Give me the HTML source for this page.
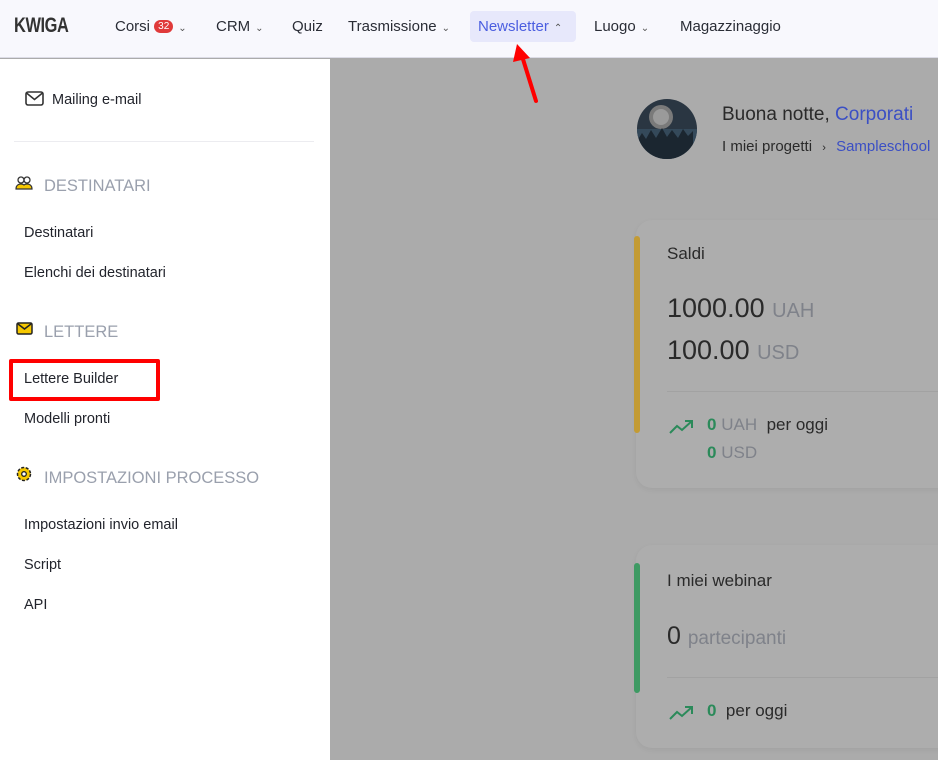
<!DOCTYPE html>
<html><head><meta charset="utf-8"><style>
*{margin:0;padding:0;box-sizing:border-box}
body{width:938px;height:760px;overflow:hidden;position:relative;background:#ababab;font-family:"Liberation Sans",sans-serif;color:#222}
.a{position:absolute;white-space:nowrap}
.hdr{position:absolute;left:0;top:0;width:938px;height:58px;background:#f8f8fd;border-bottom:1px solid #dcdce6}
.nav{font-size:15px;color:#2a2d36;top:18px}
.chev{font-size:10px;color:#555;margin-left:5px}
.side{position:absolute;left:0;top:59px;width:330px;height:701px;background:#fff}
.item{font-size:14.5px;color:#22242c}
.sec{font-size:16.5px;color:#9aa0ad}
.card{position:absolute;left:636px;width:320px;background:#adadad;border-radius:16px;box-shadow:0 2px 6px rgba(0,0,0,.05)}
.bar{position:absolute;left:634px;width:6px;border-radius:3px}
.green{color:#2b8a5a;font-weight:bold}
.gray{color:#7f828a}
</style></head><body>
<div class="hdr"></div>
<div class="a" style="left:14px;top:14px;font-size:21px;font-weight:bold;color:#333;letter-spacing:-0.5px;transform:scaleX(0.78);transform-origin:left">KWIGA</div>
<div class="a nav" style="left:115px">Corsi <span style="display:inline-block;background:#e03a3a;color:#fff;font-size:10px;border-radius:8px;padding:1px 4px;vertical-align:2px">32</span><span class="chev">⌄</span></div>
<div class="a nav" style="left:216px">CRM<span class="chev">⌄</span></div>
<div class="a nav" style="left:292px">Quiz</div>
<div class="a nav" style="left:348px">Trasmissione<span class="chev">⌄</span></div>
<div class="a" style="left:470px;top:11px;width:106px;height:31px;background:#e7e8fb;border-radius:4px"></div>
<div class="a nav" style="left:478px;color:#4b5ee0">Newsletter<span class="chev" style="color:#555">⌃</span></div>
<div class="a nav" style="left:594px">Luogo<span class="chev">⌄</span></div>
<div class="a nav" style="left:680px">Magazzinaggio</div>
<svg class="a" style="left:505px;top:40px" width="40" height="66"><line x1="31" y1="61" x2="17" y2="16" stroke="#f00" stroke-width="4" stroke-linecap="round"/><polygon points="12,4 8,22 25,18" fill="#f00"/></svg>

<div class="side"></div>
<svg class="a" style="left:25px;top:91px" width="19" height="16"><rect x="1" y="1" width="17" height="13" rx="2" fill="none" stroke="#333" stroke-width="1.6"/><path d="M1.5 2l8 6.5 8-6.5" fill="none" stroke="#333" stroke-width="1.6"/></svg>
<div class="a item" style="left:52px;top:92px">Mailing e-mail</div>
<div class="a" style="left:14px;top:141px;width:300px;height:1px;background:#ececf0"></div>
<svg class="a" style="left:14px;top:175px" width="20" height="16"><circle cx="7" cy="5" r="3" fill="none" stroke="#333" stroke-width="1.3"/><circle cx="13" cy="5" r="3" fill="none" stroke="#333" stroke-width="1.3"/><path d="M2 14c0-4 3-5 5-5s3 1 3 1 1-1 3-1 5 1 5 5z" fill="#f6c800" stroke="#333" stroke-width="1.2"/></svg>
<div class="a sec" style="left:44px;top:177px">DESTINATARI</div>
<div class="a item" style="left:24px;top:225px">Destinatari</div>
<div class="a item" style="left:24px;top:265px">Elenchi dei destinatari</div>
<svg class="a" style="left:16px;top:322px" width="17" height="13"><rect x="1" y="1" width="15" height="11" rx="1.5" fill="#f6c800" stroke="#222" stroke-width="1.5"/><path d="M2 2l6.5 5 6.5-5" fill="none" stroke="#222" stroke-width="1.5"/></svg>
<div class="a sec" style="left:44px;top:323px">LETTERE</div>
<div class="a" style="left:9px;top:359px;width:151px;height:42px;border:4px solid #f00;border-radius:2px"></div>
<div class="a item" style="left:24px;top:371px">Lettere Builder</div>
<div class="a item" style="left:24px;top:411px">Modelli pronti</div>
<svg class="a" style="left:15px;top:465px" width="18" height="18"><circle cx="9" cy="9" r="6.5" fill="#f6c800" stroke="#222" stroke-width="1.5" stroke-dasharray="3 1.6"/><circle cx="9" cy="9" r="2.3" fill="#fff" stroke="#222" stroke-width="1.3"/></svg>
<div class="a sec" style="left:44px;top:469px">IMPOSTAZIONI PROCESSO</div>
<div class="a item" style="left:24px;top:517px">Impostazioni invio email</div>
<div class="a item" style="left:24px;top:557px">Script</div>
<div class="a item" style="left:24px;top:597px">API</div>

<svg class="a" style="left:637px;top:99px" width="60" height="60"><defs><clipPath id="c"><circle cx="30" cy="30" r="30"/></clipPath></defs><g clip-path="url(#c)"><rect width="60" height="60" fill="#2a3642"/><rect y="30" width="60" height="30" fill="#34495a"/><circle cx="24" cy="18" r="12" fill="#7a7a7a"/><circle cx="24" cy="18" r="8" fill="#9a9a9a"/><path d="M0 42l5-8 4 6 5-9 5 8 6-10 5 9 5-7 6 8 5-9 5 7 5-5v30H0z" fill="#1b2630"/></g></svg>
<div class="a" style="left:722px;top:104px;font-size:19px;color:#2a2a2a">Buona notte, <span style="color:#3b4fc4">Corporati</span></div>
<div class="a" style="left:722px;top:138px;font-size:15px;color:#2a2a2a">I miei progetti <span style="font-size:11px;margin:0 6px">›</span> <span style="color:#3b4fc4">Sampleschool</span></div>

<div class="card" style="top:220px;height:268px"></div>
<div class="bar" style="top:236px;height:197px;background:#c39b34"></div>
<div class="a" style="left:667px;top:244px;font-size:17px;color:#2a2a2a">Saldi</div>
<div class="a" style="left:667px;top:293px;font-size:27px;color:#2a2a2a">1000.00 <span class="gray" style="font-size:20px">UAH</span></div>
<div class="a" style="left:667px;top:335px;font-size:27px;color:#2a2a2a">100.00 <span class="gray" style="font-size:20px">USD</span></div>
<div class="a" style="left:667px;top:391px;width:271px;height:1px;background:#a2a2a2"></div>
<svg class="a" style="left:669px;top:418px" width="26" height="18"><path d="M1 15l7-7 5 4 10-9M16 3h7v7" fill="none" stroke="#2b8a5a" stroke-width="2"/></svg>
<div class="a" style="left:707px;top:415px;font-size:17px"><span class="green">0</span> <span class="gray">UAH</span> &nbsp;<span style="color:#2a2a2a">per oggi</span></div>
<div class="a" style="left:707px;top:443px;font-size:17px"><span class="green">0</span> <span class="gray">USD</span></div>

<div class="card" style="top:545px;height:203px"></div>
<div class="bar" style="top:563px;height:130px;background:#3e9a63"></div>
<div class="a" style="left:667px;top:571px;font-size:17px;color:#2a2a2a">I miei webinar</div>
<div class="a" style="left:667px;top:622px;font-size:25px;color:#2a2a2a">0 <span class="gray" style="font-size:19px">partecipanti</span></div>
<div class="a" style="left:667px;top:677px;width:271px;height:1px;background:#a2a2a2"></div>
<svg class="a" style="left:669px;top:704px" width="26" height="18"><path d="M1 15l7-7 5 4 10-9M16 3h7v7" fill="none" stroke="#2b8a5a" stroke-width="2"/></svg>
<div class="a" style="left:707px;top:701px;font-size:17px"><span class="green">0</span> &nbsp;<span style="color:#2a2a2a">per oggi</span></div>
</body></html>
